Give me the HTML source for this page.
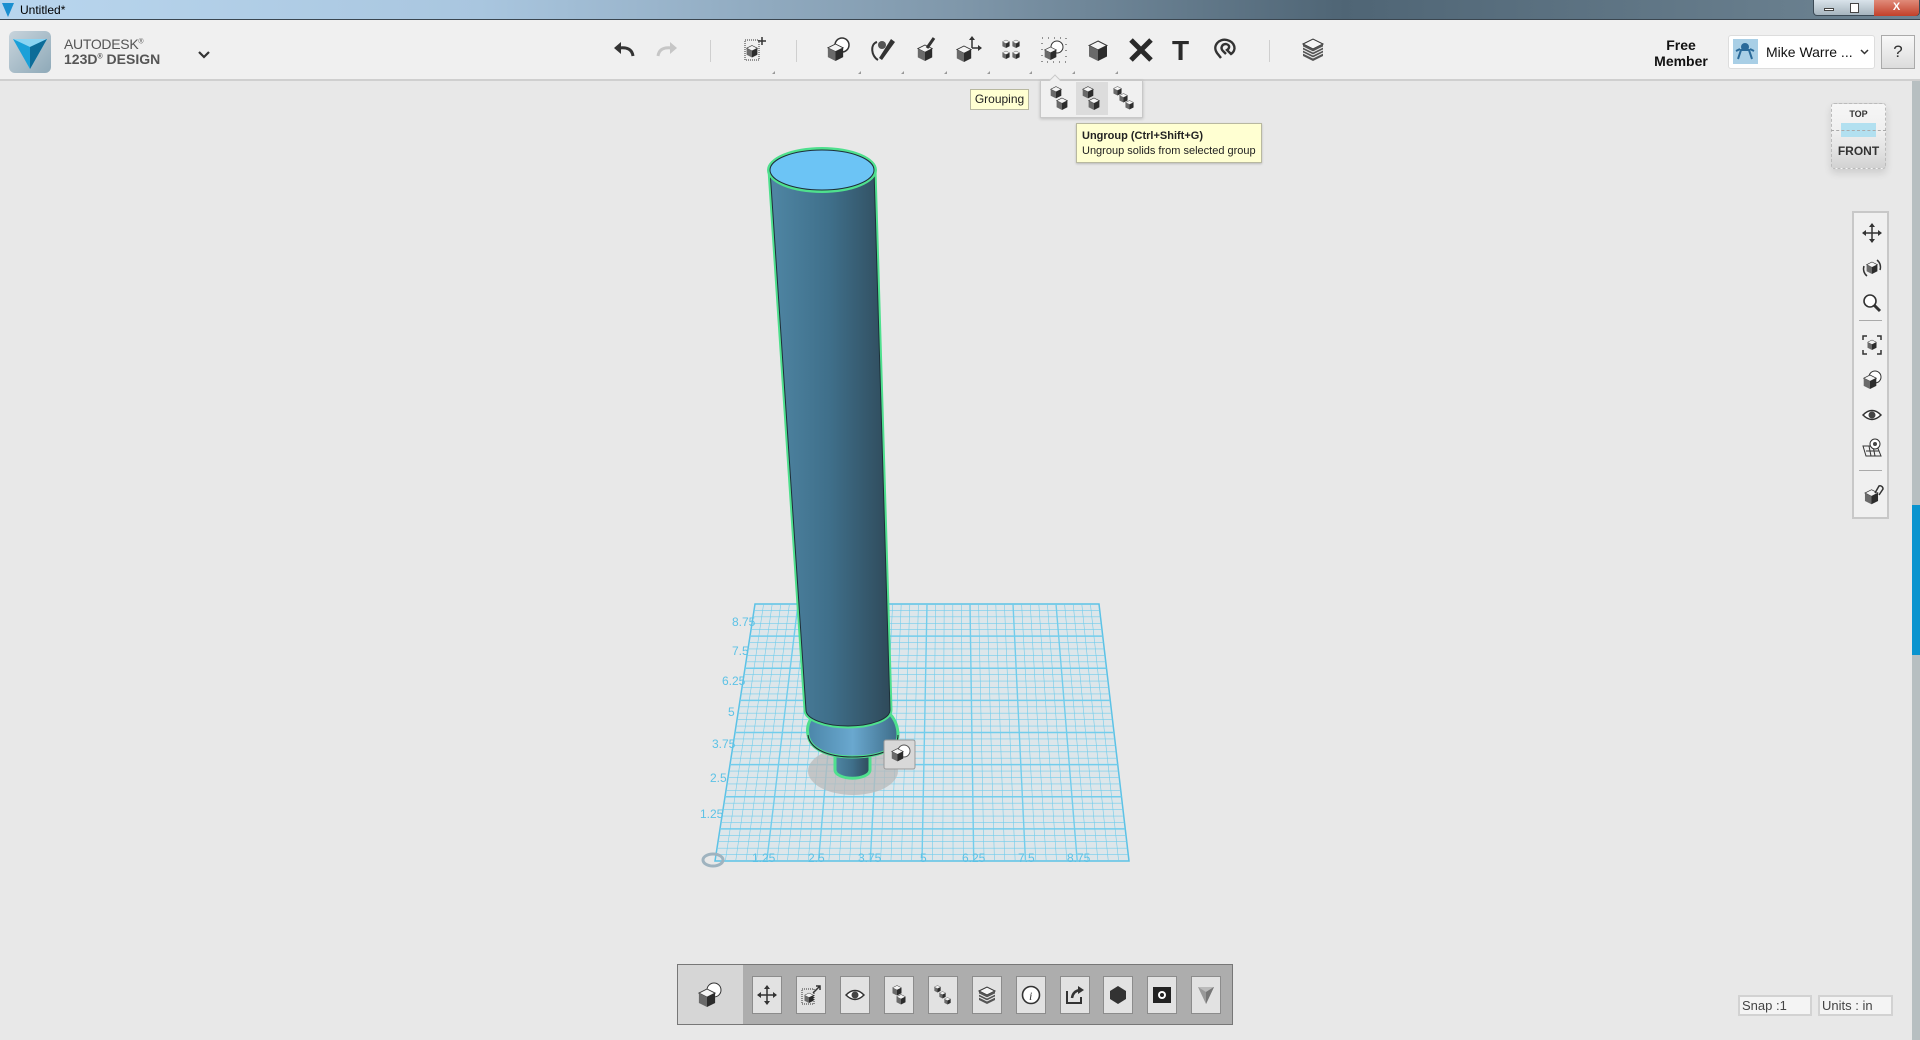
<!DOCTYPE html>
<html><head><meta charset="utf-8"><style>
*{margin:0;padding:0;box-sizing:border-box}
body{width:1920px;height:1040px;overflow:hidden;background:#e8e8e8;font-family:"Liberation Sans",Arial,sans-serif;position:relative}
.abs{position:absolute}
#title{left:0;top:0;width:1920px;height:20px;background:linear-gradient(90deg,#b9d6ee 0%,#a9c6df 25%,#7f97aa 50%,#4f6575 70%,#6f8594 100%);border-bottom:1px solid #3a4650}
#tb{left:0;top:20px;width:1920px;height:61px;background:#f0f0f0;border-bottom:2px solid #cfcfcf}
.ic{position:absolute;width:28px;height:28px}
.sep{position:absolute;top:40px;width:1px;height:22px;background:#cfcfcf}
.tri{position:absolute;top:71px;width:0;height:0;border-left:3px solid transparent;border-bottom:3px solid #999}
.bb{position:absolute;top:976px;width:30px;height:38px;background:#e2e2e2;border:1px solid #8c8c8c}
.bb svg{position:absolute;left:4px;top:8px}
.rn svg{position:absolute;left:8px}
</style></head><body>
<svg width="0" height="0" style="position:absolute"><defs>
<symbol id="cube" viewBox="0 0 20 22"><path d="M10 1L19 5.5L10 10L1 5.5Z" fill="#f4f4f4" stroke="#333" stroke-width="1"/><path d="M1 5.5L10 10L10 21L1 16.5Z" fill="#6a6a6a"/><path d="M10 10L19 5.5L19 16.5L10 21Z" fill="#2c2c2c"/></symbol>
</defs></svg>

<div id="title" class="abs"></div>
<svg class="abs" style="left:2px;top:3px" width="12" height="14"><path d="M0 0L12 0L6 14Z" fill="#1a8fd0"/></svg>
<div class="abs" style="left:20px;top:3px;font-size:12px;color:#000">Untitled*</div>
<div class="abs" style="left:1813px;top:0;width:107px;height:16px;border:1px solid #3b4a56;border-top:none;border-radius:0 0 4px 4px;background:linear-gradient(#d9e3ea,#a6b4be)"></div>
<div class="abs" style="left:1874px;top:0;width:45px;height:16px;background:linear-gradient(#e08b7a,#c2402a);border-radius:0 0 4px 0;color:#fff;font-size:11px;font-weight:bold;text-align:center;line-height:14px">X</div>
<div class="abs" style="left:1824px;top:8px;width:10px;height:3px;background:#fff;border:1px solid #444"></div>
<div class="abs" style="left:1850px;top:3px;width:9px;height:10px;background:#fff;border:1px solid #444"></div>

<div id="tb" class="abs"></div>
<div class="abs" style="left:9px;top:31px;width:42px;height:42px;border-radius:6px;background:linear-gradient(135deg,#c8d4dc,#8ea9b8)"></div>
<svg class="abs" style="left:13px;top:39px" width="34" height="30"><path d="M0 0L34 0L17 30Z" fill="#1aa0d8"/><path d="M0 0L34 0L17 8Z" fill="#8ad4f2"/><path d="M17 8L34 0L17 30Z" fill="#0c6c98"/></svg>
<div class="abs" style="left:64px;top:36px;font-size:14px;color:#555;letter-spacing:-0.3px">AUTODESK<sup style="font-size:7px">®</sup></div>
<div class="abs" style="left:64px;top:51px;font-size:14px;color:#555;font-weight:bold">123D<sup style="font-size:7px">®</sup> DESIGN</div>
<svg class="abs" style="left:198px;top:51px" width="12" height="8"><path d="M1 1L6 6L11 1" stroke="#333" stroke-width="2.2" fill="none"/></svg>
<svg class="abs" style="left:613px;top:42px" width="22" height="16"><path d="M20 14C19 7 14 5 6 6" stroke="#333" stroke-width="3" fill="none"/><path d="M1 6L8 0L8 12Z" fill="#333"/></svg>
<svg class="abs" style="left:656px;top:42px" width="22" height="16"><path d="M2 14C3 7 8 5 16 6" stroke="#c6c6c6" stroke-width="3" fill="none"/><path d="M21 6L14 0L14 12Z" fill="#c6c6c6"/></svg>
<div class="sep" style="left:710px"></div>
<svg class="ic" style="left:742px;top:36px" viewBox="0 0 28 28"><rect x="3" y="4" width="14" height="20" fill="none" stroke="#333" stroke-dasharray="1 1"/><use href="#cube" x="4" y="8" width="12" height="15"/><path d="M20 1V9M16 5H24" stroke="#333" stroke-width="1.5"/></svg>
<div class="sep" style="left:796px"></div>
<svg class="ic" style="left:825px;top:36px" viewBox="0 0 28 28"><circle cx="17" cy="9" r="7" fill="#fff" stroke="#333" stroke-width="1.5"/><use href="#cube" x="2" y="7" width="17" height="19"/></svg>
<svg class="ic" style="left:869px;top:36px" viewBox="0 0 28 28"><path d="M8 6C1 8 2 20 9 24" stroke="#333" stroke-width="2" fill="none"/><path d="M10 22L22 3L26 6L13 24Z" fill="#333"/><circle cx="13" cy="9" r="4" fill="#555"/></svg>
<svg class="ic" style="left:913px;top:36px" viewBox="0 0 28 28"><use href="#cube" x="4" y="8" width="16" height="18"/><path d="M14 12L21 2" stroke="#333" stroke-width="3"/></svg>
<svg class="ic" style="left:955px;top:36px" viewBox="0 0 28 28"><use href="#cube" x="1" y="9" width="16" height="18"/><path d="M17 12V2M17 12H26" stroke="#333" stroke-width="1.5"/><path d="M14 4L17 0L20 4ZM23 9L27 12L23 15Z" fill="#333"/></svg>
<svg class="ic" style="left:997px;top:36px" viewBox="0 0 28 28"><use href="#cube" x="5" y="3" width="8" height="10"/><use href="#cube" x="15" y="3" width="8" height="10"/><use href="#cube" x="5" y="14" width="8" height="10"/><use href="#cube" x="15" y="14" width="8" height="10"/></svg>
<svg class="ic" style="left:1040px;top:36px" viewBox="0 0 28 28"><rect x="2" y="2" width="24" height="24" fill="none" stroke="#333" stroke-dasharray="1 5"/><circle cx="17" cy="11" r="6" fill="#fff" stroke="#333"/><use href="#cube" x="4" y="10" width="13" height="15"/></svg>
<svg class="ic" style="left:1084px;top:36px" viewBox="0 0 28 28"><use href="#cube" x="4" y="4" width="20" height="22"/></svg>
<svg class="ic" style="left:1127px;top:36px" viewBox="0 0 28 28"><path d="M4 4L24 24M24 4L4 24" stroke="#2a2a2a" stroke-width="5"/></svg>
<div class="abs" style="left:1172px;top:38px;font-size:28px;font-weight:bold;color:#2a2a2a;line-height:26px">T</div>
<svg class="ic" style="left:1213px;top:36px" viewBox="0 0 28 28"><path d="M8 22L4 17C-1 10 6 2 14 4C22 6 24 14 18 18L14 14C17 12 17 9 13 8C9 8 7 12 10 15L13 18" stroke="#333" stroke-width="2.4" fill="none"/></svg>
<div class="sep" style="left:1269px"></div>
<svg class="ic" style="left:1299px;top:36px" viewBox="0 0 28 28"><path d="M4 8L14 3L24 8L14 13Z" fill="#f4f4f4" stroke="#333"/><path d="M4 8V20L14 25V13ZM14 13V25L24 20V8Z" fill="#555"/><path d="M4 11L14 16L24 11M4 14L14 19L24 14M4 17L14 22L24 17" stroke="#eee" stroke-width="1" fill="none"/></svg>
<div class="tri" style="left:772px"></div><div class="tri" style="left:858px"></div><div class="tri" style="left:901px"></div><div class="tri" style="left:944px"></div><div class="tri" style="left:987px"></div><div class="tri" style="left:1029px"></div><div class="tri" style="left:1072px"></div><div class="tri" style="left:1115px"></div>
<div class="abs" style="left:1650px;top:37px;width:62px;text-align:center;font-size:14px;font-weight:bold;color:#111;line-height:16px">Free<br>Member</div>
<div class="abs" style="left:1728px;top:35px;width:147px;height:34px;background:#fff;border:1px solid #ddd;border-radius:3px"></div>
<div class="abs" style="left:1733px;top:39px;width:25px;height:25px;background:#a9cfe6"></div>
<svg class="abs" style="left:1735px;top:41px" width="21" height="21"><circle cx="10" cy="6" r="4" fill="#2a6a9a"/><path d="M3 18L6 9H14L17 18M1 10L5 8M19 10L15 8" stroke="#2a6a9a" stroke-width="2" fill="none"/></svg>
<div class="abs" style="left:1766px;top:44px;font-size:14px;color:#111">Mike Warre ...</div>
<svg class="abs" style="left:1860px;top:49px" width="9" height="6"><path d="M1 1L4.5 4.5L8 1" stroke="#333" stroke-width="1.5" fill="none"/></svg>
<div class="abs" style="left:1881px;top:35px;width:34px;height:34px;background:linear-gradient(#f8f8f8,#dcdcdc);border:1px solid #aaa;font-size:17px;color:#333;text-align:center;line-height:32px">?</div>

<div class="abs" style="left:970px;top:89px;width:59px;height:21px;background:#ffffd2;border:1px solid #b8b8a0;font-size:12px;color:#222;line-height:19px;text-align:center">Grouping</div>
<div class="abs" style="left:1040px;top:80px;width:103px;height:38px;background:#f0f0f0;border:1px solid #c8c8c8;box-shadow:0 1px 3px rgba(0,0,0,.2)"></div>
<div class="abs" style="left:1051px;top:76px;width:8px;height:8px;background:#f0f0f0;border-left:1px solid #c8c8c8;border-top:1px solid #c8c8c8;transform:rotate(45deg)"></div>
<div class="abs" style="left:1076px;top:82px;width:32px;height:33px;background:#dcdcdc"></div>
<svg class="abs" style="left:1048px;top:86px" width="24" height="26"><use href="#cube" x="2" y="0" width="12" height="13"/><use href="#cube" x="8" y="11" width="12" height="14"/></svg>
<svg class="abs" style="left:1080px;top:86px" width="24" height="26"><use href="#cube" x="2" y="0" width="12" height="13"/><use href="#cube" x="8" y="11" width="12" height="14"/></svg>
<svg class="abs" style="left:1112px;top:86px" width="24" height="26"><use href="#cube" x="1" y="0" width="9" height="10"/><use href="#cube" x="7" y="7" width="9" height="10"/><use href="#cube" x="13" y="14" width="9" height="10"/></svg>
<div class="abs" style="left:1076px;top:123px;width:186px;height:40px;background:#ffffd2;border:1px solid #b8b8a0;box-shadow:0 1px 2px rgba(0,0,0,.2);padding:5px 0 0 5px;font-size:11px;color:#222;line-height:15px"><b>Ungroup (Ctrl+Shift+G)</b><br>Ungroup solids from selected group</div>

<div class="abs" style="left:1831px;top:103px;width:55px;height:66px;border:1px dashed #bbb;border-radius:3px;background:linear-gradient(#f6f6f6 0%,#f0f0f0 40%,#e4e4e4 70%,#d2d2d2 100%);box-shadow:0 4px 8px rgba(0,0,0,.12)"></div>
<div class="abs" style="left:1841px;top:123px;width:35px;height:14px;background:#b2e0f0"></div>
<div class="abs" style="left:1831px;top:130px;width:55px;border-top:1px dashed #aaa"></div>
<div class="abs" style="left:1831px;top:109px;width:55px;text-align:center;font-size:9px;font-weight:bold;color:#333">TOP</div>
<div class="abs" style="left:1831px;top:144px;width:55px;text-align:center;font-size:12px;font-weight:bold;color:#333">FRONT</div>

<div class="abs rn" style="left:1852px;top:211px;width:37px;height:308px;background:#f0f0f0;border:2px solid #c8c8c8">
<svg style="top:10px" width="20" height="20"><path d="M10 1V19M1 10H19" stroke="#333" stroke-width="1.5"/><path d="M10 0L7 4H13ZM10 20L7 16H13ZM0 10L4 7V13ZM20 10L16 7V13Z" fill="#333"/></svg>
<svg style="top:45px" width="20" height="20"><use href="#cube" x="4" y="3" width="12" height="14"/><path d="M15 2A9 9 0 0 1 18 12M5 18A9 9 0 0 1 2 8" stroke="#333" stroke-width="1.5" fill="none"/></svg>
<svg style="top:80px" width="20" height="20"><circle cx="8" cy="8" r="6" fill="#fff" stroke="#333" stroke-width="1.6"/><path d="M12 12L18 18" stroke="#333" stroke-width="3"/></svg>
<div style="position:absolute;left:5px;top:107px;width:23px;height:1px;background:#aaa"></div>
<svg style="top:122px" width="20" height="20"><path d="M1 5V1H5M15 1H19V5M19 15V19H15M5 19H1V15" stroke="#333" stroke-width="1.5" fill="none"/><use href="#cube" x="5" y="4" width="10" height="12"/></svg>
<svg style="top:157px" width="20" height="20"><circle cx="13" cy="7" r="6" fill="#fff" stroke="#333"/><use href="#cube" x="1" y="4" width="14" height="16"/></svg>
<svg style="top:192px" width="20" height="20"><path d="M1 10Q10 1 19 10Q10 19 1 10Z" fill="#fff" stroke="#333" stroke-width="1.5"/><circle cx="10" cy="10" r="3.5" fill="#444"/></svg>
<svg style="top:225px" width="20" height="20"><path d="M1 8L15 8L19 18L4 18ZM4 13H17M7 8L9 18M11 8L13 18" stroke="#333" fill="none"/><circle cx="13" cy="6" r="5" fill="#fff" stroke="#333"/><circle cx="13" cy="6" r="2" fill="#444"/></svg>
<div style="position:absolute;left:5px;top:257px;width:23px;height:1px;background:#aaa"></div>
<svg style="top:270px" width="22" height="22"><use href="#cube" x="2" y="6" width="15" height="16"/><path d="M13 10L17 3A3 3 0 0 1 21 6L17 12" stroke="#333" stroke-width="1.5" fill="none"/></svg>
</div>
<div class="abs" style="left:1912px;top:81px;width:8px;height:959px;background:#b7bfc1"></div>
<div class="abs" style="left:1912px;top:505px;width:8px;height:150px;background:#0a94cf"></div>

<svg class="abs" style="left:0;top:0" width="1910" height="1040">
<defs>
<linearGradient id="cyl" x1="0" x2="1"><stop offset="0" stop-color="#4f86a4"/><stop offset=".5" stop-color="#3f6f8a"/><stop offset="1" stop-color="#2f4a5a"/></linearGradient>
<linearGradient id="disc" x1="0" x2="1"><stop offset="0" stop-color="#4b86a9"/><stop offset=".5" stop-color="#6aa8cf"/><stop offset="1" stop-color="#3d6c88"/></linearGradient>
</defs>
<path d="M755 604L1099 604L1129 861L715 861Z" fill="#dde6ea" stroke="#5cc2e6" stroke-width="1.5"/>
<g id="grid" stroke="#72cdec" stroke-width="0.7" fill="none"></g>
<ellipse cx="853" cy="771" rx="45" ry="24" fill="#b9b9b9" opacity=".75"/>
<path d="M835 748V770A17 8 0 0 0 870 770V748Z" fill="url(#cyl)" stroke="#4fe08e" stroke-width="3"/>
<path d="M820 710C810 716 806 726 808 735C810 750 830 757 852 757C878 757 898 750 898 735C898 724 893 716 886 710Z" fill="url(#disc)" stroke="#4fe08e" stroke-width="3"/>
<path d="M808 735C810 750 830 757 852 757C878 757 898 750 898 735" stroke="#223" stroke-width="1" fill="none"/>
<path d="M770 170L806 710A42 16 0 0 0 890 710L874 170Z" fill="url(#cyl)" stroke="#4fe08e" stroke-width="5" stroke-linejoin="round"/>
<path d="M770 170L806 710A42 16 0 0 0 890 710L874 170Z" fill="url(#cyl)" stroke="#1e2e38" stroke-width="1"/>
<ellipse cx="822" cy="170" rx="55" ry="23" fill="#4fe08e"/>
<ellipse cx="822" cy="170" rx="52" ry="20" fill="#6cc4f5" stroke="#1e2e38" stroke-width="1"/>
<rect x="884" y="740" width="31" height="29" rx="2" fill="#d8d8d8" stroke="#999"/>
<circle cx="904" cy="751" r="6" fill="#fff" stroke="#555"/>
<use href="#cube" x="891" y="748" width="13" height="14"/>
<ellipse cx="713" cy="860" rx="10" ry="6" fill="none" stroke="#9fb3bf" stroke-width="3"/>
<g font-family="Liberation Sans,sans-serif" font-size="12" fill="#5cc2e6">
<text x="732" y="626">8.75</text><text x="732" y="655">7.5</text><text x="722" y="685">6.25</text><text x="728" y="716">5</text><text x="712" y="748">3.75</text><text x="710" y="782">2.5</text><text x="700" y="818">1.25</text>
<text x="752" y="862">1.25</text><text x="808" y="862">2.5</text><text x="858" y="862">3.75</text><text x="920" y="862">5</text><text x="962" y="862">6.25</text><text x="1018" y="862">7.5</text><text x="1067" y="862">8.75</text>
</g>
</svg>
<script>
(function(){var g=document.getElementById('grid'),s='';var N=40;
for(var i=1;i<N;i++){var t=i/N;var x1=755+344*t,x2=715+414*t;var w=i%5==0?1.4:0.6;s+='<line x1="'+x1+'" y1="604" x2="'+x2+'" y2="861" stroke-width="'+w+'"/>';}
for(var j=1;j<N;j++){var t=j/N;var y=604+257*t;var xl=755-40*t,xr=1099+30*t;var w=j%5==0?1.4:0.6;s+='<line x1="'+xl+'" y1="'+y+'" x2="'+xr+'" y2="'+y+'" stroke-width="'+w+'"/>';}
g.innerHTML=s;})();
</script>

<div class="abs" style="left:677px;top:964px;width:556px;height:61px;background:#adadad;border:1px solid #777"></div>
<div class="abs" style="left:678px;top:965px;width:65px;height:59px;background:#d6d6d6"></div>
<svg class="abs" style="left:695px;top:980px" width="30" height="30"><circle cx="19" cy="10" r="7" fill="#fff" stroke="#333"/><use href="#cube" x="3" y="8" width="18" height="20"/></svg>
<div class="bb" style="left:752px"><svg width="20" height="20"><path d="M10 1V19M1 10H19" stroke="#333" stroke-width="1.5"/><path d="M10 0L7 4H13ZM10 20L7 16H13ZM0 10L4 7V13ZM20 10L16 7V13Z" fill="#333"/></svg></div>
<div class="bb" style="left:796px"><svg width="20" height="20"><rect x="1" y="4" width="12" height="15" fill="none" stroke="#333" stroke-dasharray="1 1"/><use href="#cube" x="3" y="7" width="10" height="12"/><path d="M12 8L19 1M15 1H19V5" stroke="#333" stroke-width="1.5" fill="none"/></svg></div>
<div class="bb" style="left:840px"><svg width="20" height="20"><path d="M1 10Q10 1 19 10Q10 19 1 10Z" fill="#fff" stroke="#333" stroke-width="1.5"/><circle cx="10" cy="10" r="3.5" fill="#444"/></svg></div>
<div class="bb" style="left:884px"><svg width="20" height="20"><use href="#cube" x="3" y="0" width="10" height="11"/><use href="#cube" x="7" y="9" width="10" height="11"/></svg></div>
<div class="bb" style="left:928px"><svg width="20" height="20"><use href="#cube" x="1" y="0" width="7" height="8"/><use href="#cube" x="6" y="6" width="7" height="8"/><use href="#cube" x="11" y="12" width="7" height="8"/></svg></div>
<div class="bb" style="left:972px"><svg width="20" height="20"><path d="M2 6L10 2L18 6L10 10Z" fill="#f4f4f4" stroke="#333"/><path d="M2 6V15L10 19V10ZM10 10V19L18 15V6Z" fill="#555"/><path d="M2 9L10 13L18 9M2 12L10 16L18 12" stroke="#eee" fill="none"/></svg></div>
<div class="bb" style="left:1016px"><svg width="20" height="20"><circle cx="10" cy="10" r="8.5" fill="#fff" stroke="#333" stroke-width="1.6"/><text x="8" y="15" font-size="12" font-style="italic" font-family="Liberation Serif,serif" fill="#333">i</text></svg></div>
<div class="bb" style="left:1060px"><svg width="20" height="20"><path d="M2 6V18H16V12" stroke="#333" stroke-width="2" fill="none"/><path d="M7 13Q8 6 15 5" stroke="#333" stroke-width="2.5" fill="none"/><path d="M13 1L19 5L13 9Z" fill="#333"/></svg></div>
<div class="bb" style="left:1103px"><svg width="20" height="20"><path d="M10 1L18 6L18 14L10 19L2 14L2 6Z" fill="#333"/></svg></div>
<div class="bb" style="left:1147px"><svg width="20" height="20"><rect x="1" y="2" width="18" height="16" fill="#222"/><circle cx="10" cy="10" r="4" fill="#fff"/><circle cx="10" cy="10" r="2" fill="#222"/></svg></div>
<div class="bb" style="left:1191px"><svg width="20" height="20"><path d="M2 2L18 2L10 19Z" fill="#999"/><path d="M2 2L18 2L10 7Z" fill="#bbb"/><path d="M10 7L18 2L10 19Z" fill="#777"/></svg></div>

<div class="abs" style="left:1738px;top:995px;width:74px;height:21px;background:#f4f4f4;border:2px solid #d2d2d2;font-size:13px;color:#444;line-height:17px;padding-left:2px">Snap :1</div>
<div class="abs" style="left:1818px;top:995px;width:75px;height:21px;background:#f4f4f4;border:2px solid #d2d2d2;font-size:13px;color:#444;line-height:17px;padding-left:2px">Units : in</div>
</body></html>
